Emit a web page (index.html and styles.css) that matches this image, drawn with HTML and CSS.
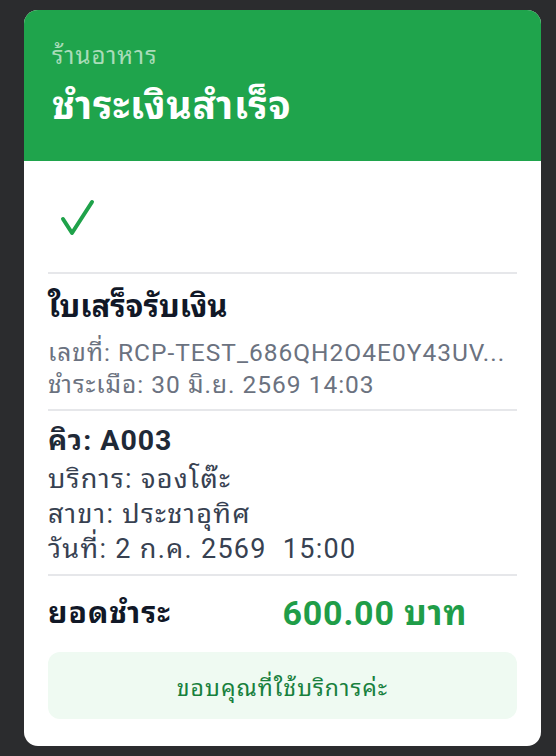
FILE: index.html
```html
<!DOCTYPE html>
<html lang="th">
<head>
<meta charset="utf-8">
<link rel="stylesheet" href="styles.css">
</head>
<body>
<div class="card">
  <header class="head">
    <div class="shop">ร้านอาหาร</div>
    <h1 class="title">ชำระเงินสำเร็จ</h1>
  </header>
  <main class="body">
    <div class="check">
      <svg width="40" height="44" viewBox="0 0 40 44"><path d="M5 23 L14 37 L34 6" fill="none" stroke="#1fa24a" stroke-width="4" stroke-linecap="round" stroke-linejoin="round"/></svg>
    </div>
    <section class="sec">
      <h2 class="rtitle">ใบเสร็จรับเงิน</h2>
      <div class="meta">เลขที่: RCP-TEST_686QH2O4E0Y43UV...</div>
      <div class="meta">ชำระเมือ: 30 มิ.ย. 2569 14:03</div>
    </section>
    <section class="sec sec2">
      <div class="queue">คิว: A003</div>
      <div class="info">บริการ: จองโต๊ะ</div>
      <div class="info">สาขา: ประชาอุทิศ</div>
      <div class="info">วันที่: 2 ก.ค. 2569&nbsp; 15:00</div>
    </section>
    <section class="sec total">
      <div class="tlabel">ยอดชำระ</div>
      <div class="tvalue">600.00 บาท</div>
    </section>
    <div class="thanks">ขอบคุณที่ใช้บริการค่ะ</div>
  </main>
</div>
</body>
</html>
```
FILE: styles.css
```css
html, body { margin: 0; padding: 0; }
body {
  background: #2b2c2e;
  font-family: Roboto, "Noto Sans Thai Looped", "Noto Sans Thai", sans-serif;
  padding: 10px 15px 10px 24px;
  height: 756px;
  box-sizing: border-box;
}
.card {
  width: 517px;
  height: 736px;
  background: #fff;
  border-radius: 14px;
  overflow: hidden;
}
.head {
  background: #1fa44c;
  height: 151px;
  box-sizing: border-box;
  padding: 32px 24px 0 28px;
}
.shop {
  color: #a9dcb9;
  font-size: 24px;
  letter-spacing: 1px;
  line-height: 28px;
}
.title {
  margin: 13px 0 0;
  color: #fff;
  font-size: 39px;
  letter-spacing: 0.7px;
  font-weight: 700;
  line-height: 46px;
}
.body {
  padding: 35px 24px 0;
}
.check { height: 44px; padding-left: 10px; margin-bottom: 32px; }
.check svg { display: block; }
.sec {
  border-top: 2px solid #e6e7ea;
  padding: 11px 0 8px;
}
.rtitle {
  margin: 0 0 8px;
  font-size: 31px;
  font-weight: 700;
  color: #111827;
  line-height: 44px;
}
.meta {
  font-size: 24.5px;
  letter-spacing: 1px;
  color: #6b7280;
  line-height: 32px;
  white-space: nowrap;
}
.sec2 { padding: 12px 0 7px; }
.queue {
  font-size: 28.5px;
  letter-spacing: 1px;
  font-weight: 700;
  color: #1f2937;
  line-height: 36px;
  margin-bottom: 3px;
}
.info {
  font-size: 27px;
  letter-spacing: 1.3px;
  color: #374151;
  line-height: 35px;
  white-space: nowrap;
}
.total {
  display: grid;
  grid-template-columns: 1fr 1fr;
  align-items: center;
  height: 68px;
  padding: 0;
  box-sizing: border-box;
}
.tlabel { font-size: 30px; letter-spacing: 1px; font-weight: 700; color: #111827; }
.tvalue { font-size: 34px; letter-spacing: 0.8px; font-weight: 700; color: #1f9d48; white-space: nowrap; }
.thanks {
  margin-top: 10px;
  background: #effaf2;
  border-radius: 12px;
  height: 67px;
  display: flex;
  align-items: center;
  justify-content: center;
  color: #17803d;
  font-size: 23px;
  letter-spacing: 1px;
}
```
